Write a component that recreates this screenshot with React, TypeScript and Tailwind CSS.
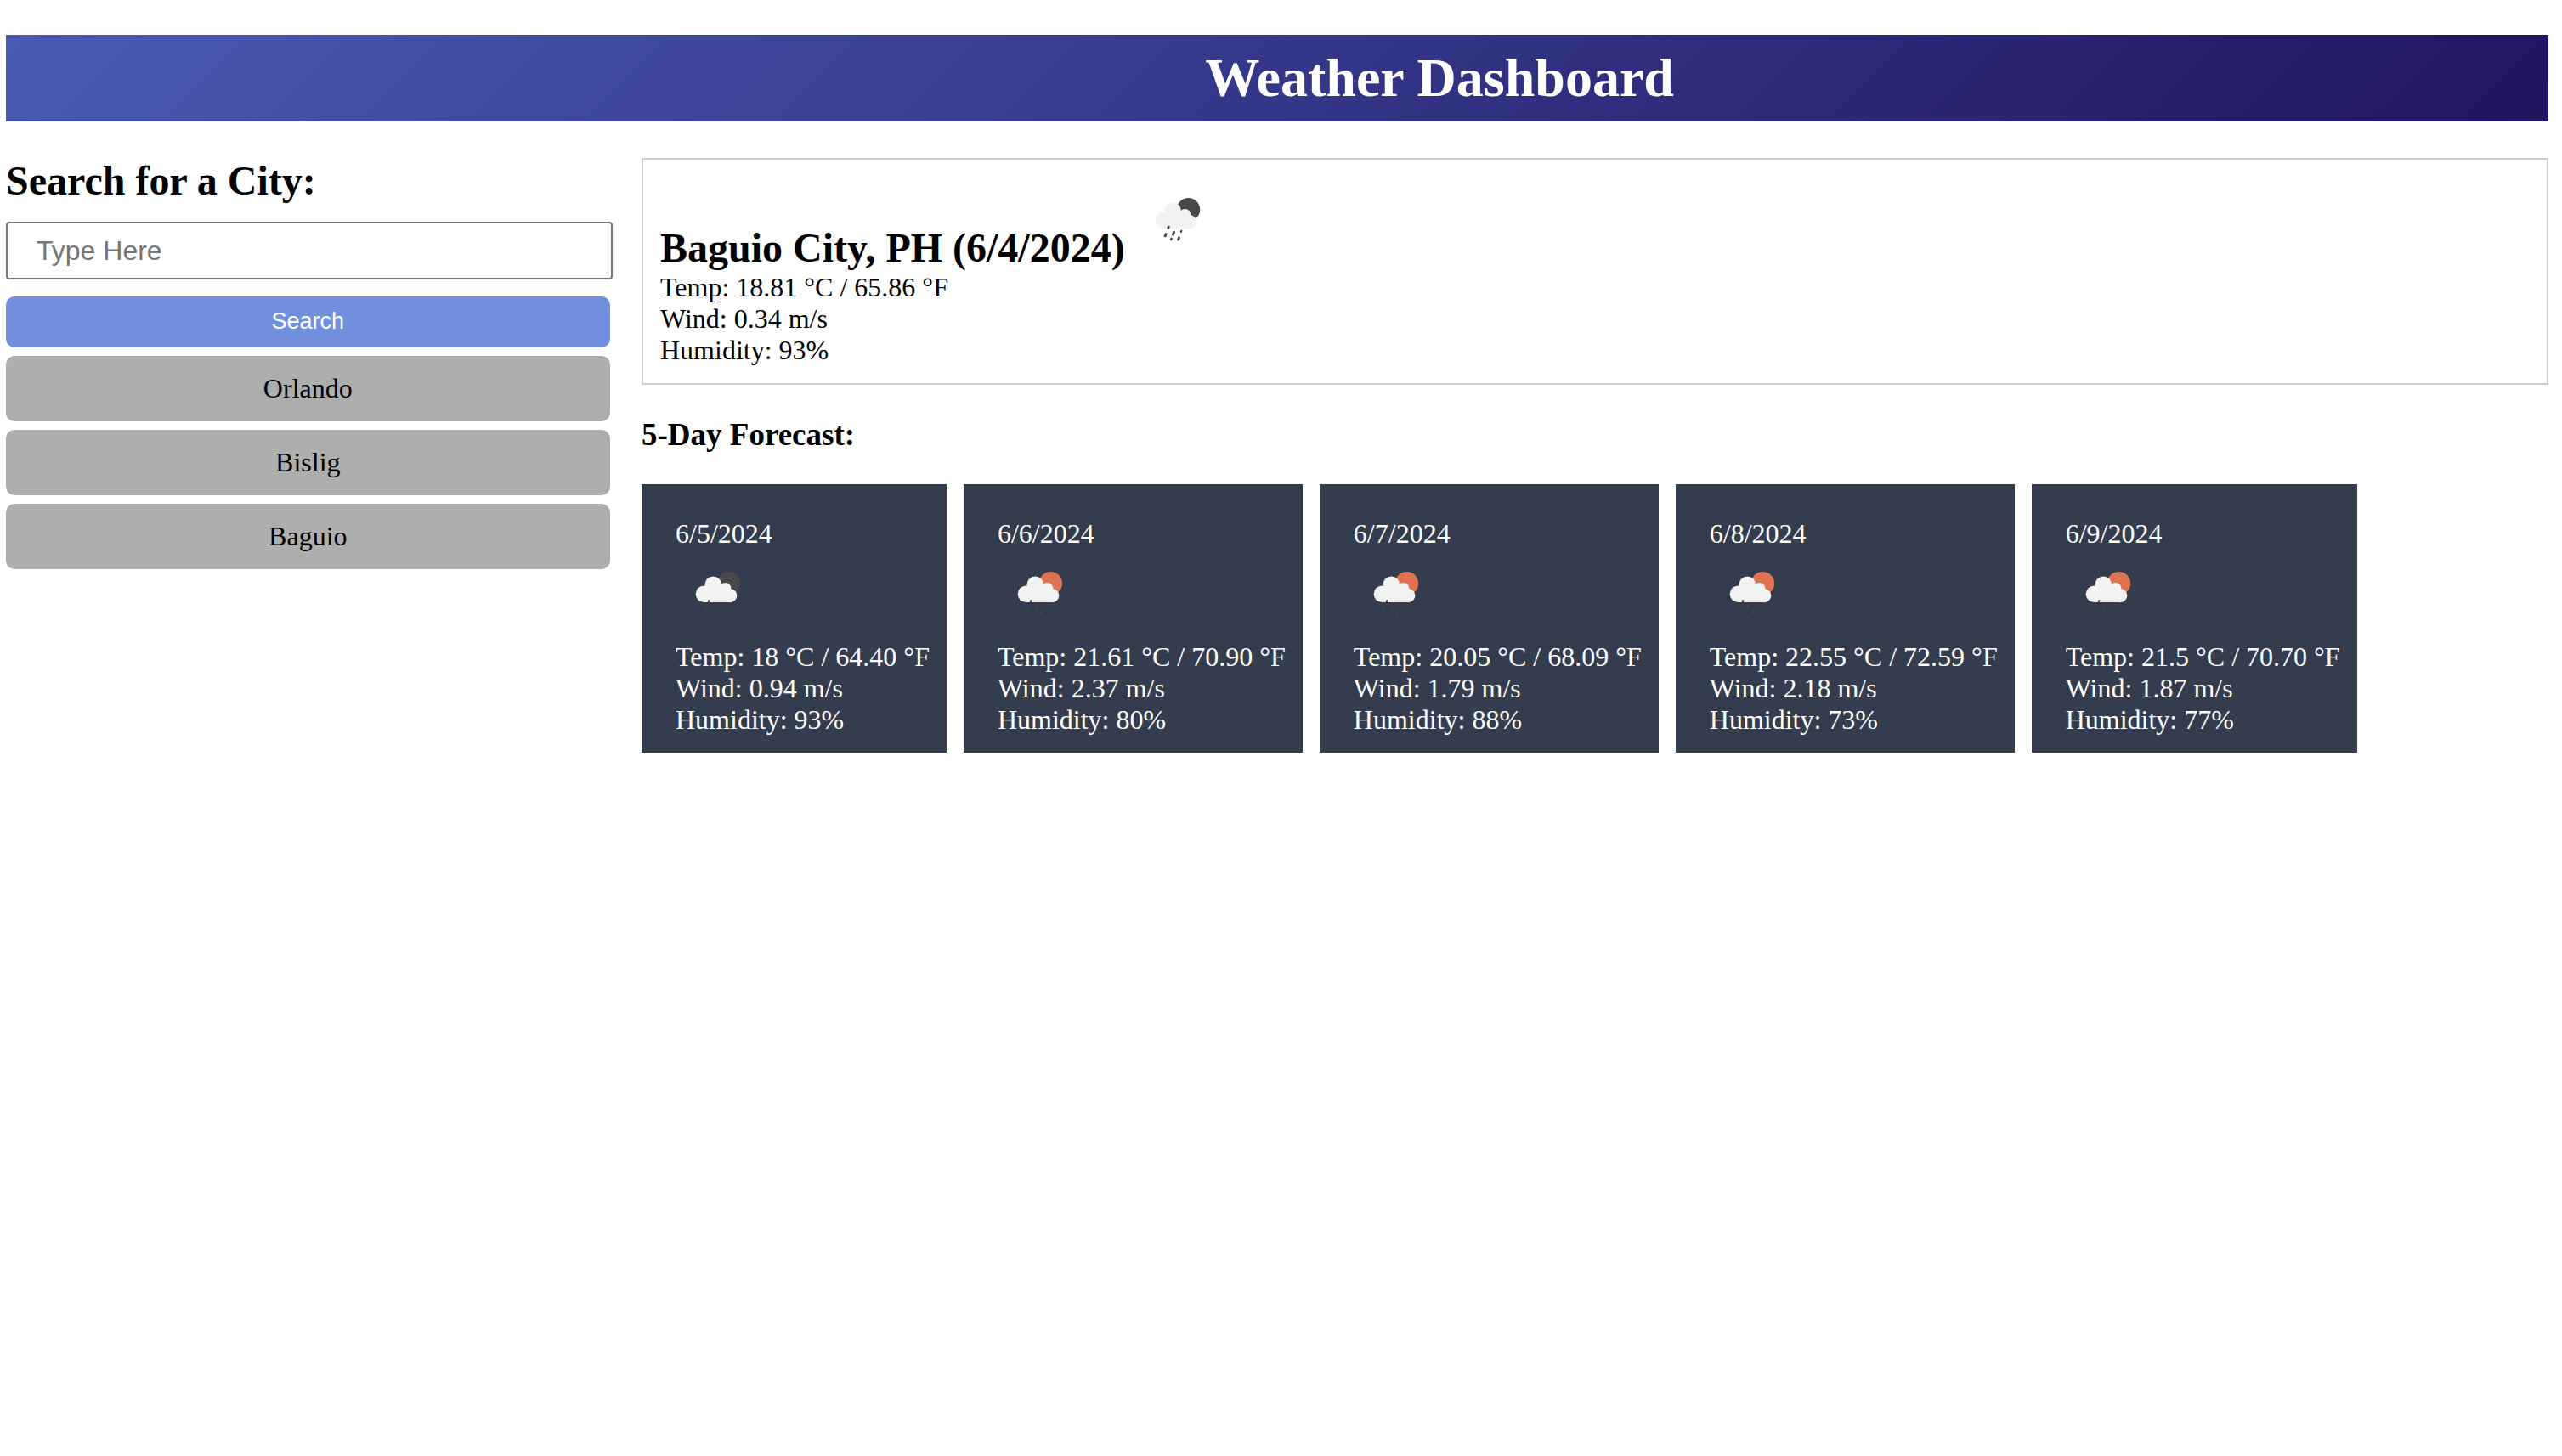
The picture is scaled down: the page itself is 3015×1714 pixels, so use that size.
import React, { useState } from "react";

type Day = { date: string; temp: string; wind: string; humidity: string; night?: boolean };

const cities = ["Orlando", "Bislig", "Baguio"];

const forecast: Day[] = [
  { date: "6/5/2024", temp: "18 °C / 64.40 °F", wind: "0.94 m/s", humidity: "93%", night: true },
  { date: "6/6/2024", temp: "21.61 °C / 70.90 °F", wind: "2.37 m/s", humidity: "80%" },
  { date: "6/7/2024", temp: "20.05 °C / 68.09 °F", wind: "1.79 m/s", humidity: "88%" },
  { date: "6/8/2024", temp: "22.55 °C / 72.59 °F", wind: "2.18 m/s", humidity: "73%" },
  { date: "6/9/2024", temp: "21.5 °C / 70.70 °F", wind: "1.87 m/s", humidity: "77%" },
];

function RainIcon({ night = false, faint = false }: { night?: boolean; faint?: boolean }) {
  return (
    <svg
      viewBox="0 0 100 100"
      role="img"
      aria-label={night ? "Rain at night" : "Rain"}
      className="inline-block size-[100px] align-baseline"
    >
      <circle cx="62.5" cy="38.7" r="13.7" fill={night ? "#48484a" : "#de7351"} />
      <g fill="#f2f2f2">
        <circle cx="44.3" cy="40.2" r="9.8" />
        <circle cx="33.5" cy="51.3" r="9.8" />
        <circle cx="58.5" cy="45" r="7" />
        <circle cx="64.3" cy="53.2" r="8" />
        <path d="M33 61.1 L34 44 L44 36 L59 42 L65 61.1 Z" />
      </g>
      <g stroke={faint ? "#4c4645" : "#48484a"} strokeLinecap="round" strokeWidth={faint ? 1.5 : 3}>
        <path d="M39.3 59.2 L38.8 60.2" stroke={faint ? "#3a3a3c" : "#48484a"} strokeWidth={faint ? 2.2 : 3} />
        <path d="M36.2 67.6 L35.2 69.8" />
        <path d="M45.6 65.4 L44.4 68" />
        <path d="M54.4 63.7 L53.8 65" strokeWidth={faint ? 1.3 : 2.2} />
        <path d="M42.6 72.8 L42 74" strokeWidth={faint ? 1.3 : 2.6} />
        <path d="M51.5 71.9 L50.6 74" />
      </g>
    </svg>
  );
}

function Readings({ temp, wind, humidity }: { temp: string; wind: string; humidity: string }) {
  return (
    <>
      <p>Temp: {temp}</p>
      <p>Wind: {wind}</p>
      <p>Humidity: {humidity}</p>
    </>
  );
}

export default function App() {
  const [query, setQuery] = useState("");
  return (
    <div className="min-h-screen bg-white pt-[41px] pr-4 pb-10 pl-[7px] font-['Liberation_Serif',serif] text-[32px] leading-[37px] text-black">
      <header className="bg-[linear-gradient(135deg,#495ab2,#20145f)] py-[14px] pl-[382px] text-center text-white">
        <h1 className="text-[64px] leading-[74px] font-bold">Weather Dashboard</h1>
      </header>

      <div className="mt-[43px] flex">
        <aside className="w-1/4">
          <form onSubmit={(e) => e.preventDefault()}>
            <label htmlFor="city" className="block text-[48px] leading-[53px] font-bold">
              Search for a City:
            </label>
            <input
              id="city"
              type="text"
              value={query}
              onChange={(e) => setQuery(e.target.value)}
              placeholder="Type Here"
              className="mt-[22px] block h-[68px] w-[calc(95%+3px)] rounded-[4px] border-2 border-[#767676] bg-white px-[34px] font-['Liberation_Sans',sans-serif] text-[32px] placeholder:text-[#757575]"
            />
            <button
              type="submit"
              className="mt-5 block h-[60px] w-[95%] rounded-[10px] bg-[#7090de] pb-0.5 font-['Liberation_Sans',sans-serif] text-[27px] text-white"
            >
              Search
            </button>
          </form>
          <div className="mt-[10px] flex flex-col gap-[10px]">
            {cities.map((city) => (
              <button key={city} type="button" className="w-[95%] rounded-[10px] bg-[#aeaeae] py-5 text-center">
                {city}
              </button>
            ))}
          </div>
        </aside>

        <main className="w-3/4">
          <section className="border-2 border-[#ccc] p-5">
            <h2 className="text-[48px] leading-[57px] font-bold">
              Baguio City, PH (6/4/2024) <RainIcon night />
            </h2>
            <Readings temp="18.81 °C / 65.86 °F" wind="0.34 m/s" humidity="93%" />
          </section>

          <h3 className="my-[37px] text-[37px] leading-[43px] font-bold">5-Day Forecast:</h3>

          <div className="flex flex-wrap gap-5">
            {forecast.map((day) => (
              <article key={day.date} className="bg-[#343d4e] pt-10 pr-5 pb-5 pl-10 text-white">
                <p>{day.date}</p>
                <div className="h-[108px] pt-px">
                  <RainIcon night={day.night} faint />
                </div>
                <Readings temp={day.temp} wind={day.wind} humidity={day.humidity} />
              </article>
            ))}
          </div>
        </main>
      </div>
    </div>
  );
}
